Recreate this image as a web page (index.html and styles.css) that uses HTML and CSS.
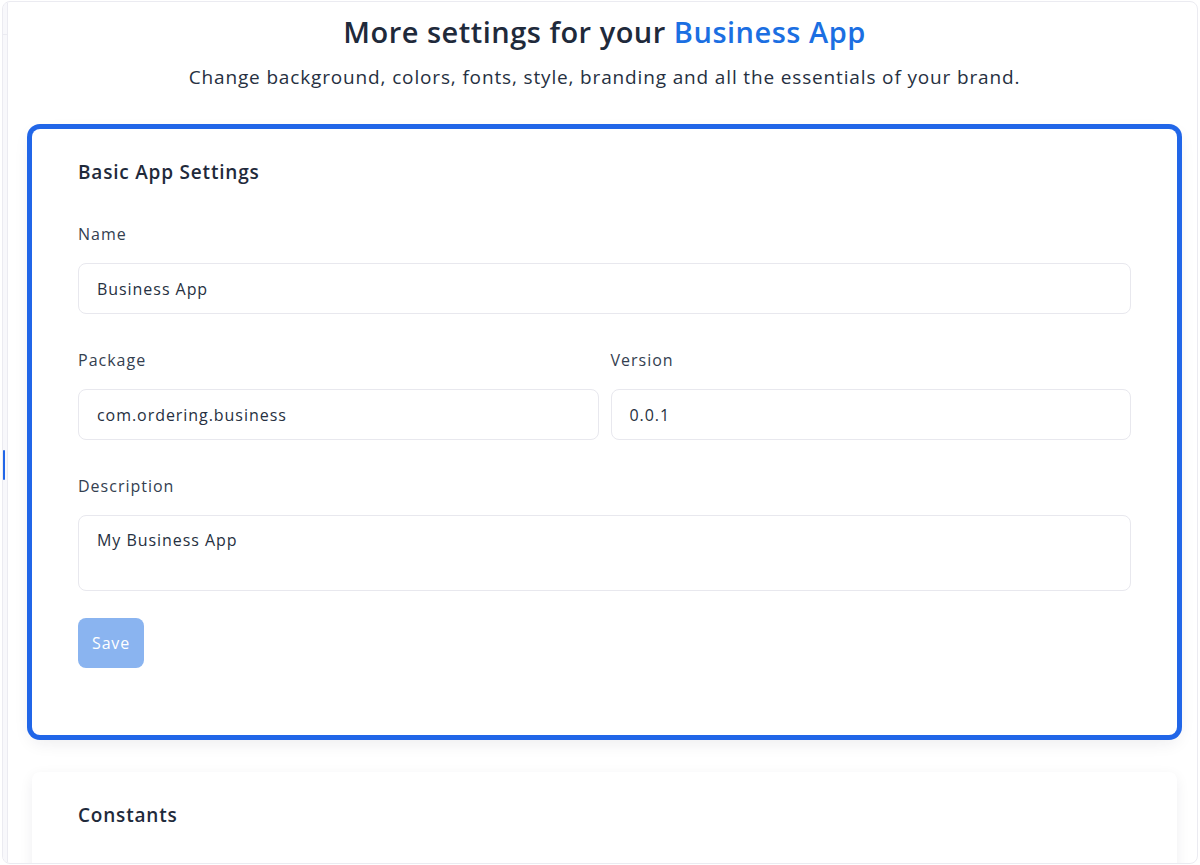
FILE: index.html
```html
<!DOCTYPE html>
<html lang="en">
<head>
<meta charset="utf-8">
<title>More settings for your Business App</title>
<link rel="stylesheet" href="styles.css">
</head>
<body>
<div class="frame">
  <aside class="sidebar">
    <div class="sidebar-head"></div>
    <div class="sidebar-marker"></div>
  </aside>
  <main class="main">
    <header class="page-head">
      <h1 class="title">More settings for your <span class="accent">Business App</span></h1>
      <p class="subtitle">Change background, colors, fonts, style, branding and all the essentials of your brand.</p>
    </header>

    <section class="card card-active">
      <h2 class="card-title">Basic App Settings</h2>
      <div class="field">
        <label class="label">Name</label>
        <div class="input">Business App</div>
      </div>
      <div class="row">
        <div class="field">
          <label class="label">Package</label>
          <div class="input">com.ordering.business</div>
        </div>
        <div class="field">
          <label class="label">Version</label>
          <div class="input">0.0.1</div>
        </div>
      </div>
      <div class="field field-last">
        <label class="label">Description</label>
        <div class="input textarea">My Business App</div>
      </div>
      <button class="btn-save" type="button">Save</button>
    </section>

    <section class="card">
      <h2 class="card-title">Constants</h2>
    </section>
  </main>
</div>
</body>
</html>
```

FILE: styles.css
```css
* { box-sizing: border-box; }

html, body {
  margin: 0;
  padding: 0;
  background: #ffffff;
  font-family: "Open Sans", "Liberation Sans", sans-serif;
  color: #263041;
}

.frame {
  margin: 1px 0 0 2px;
  width: 1196px;
  height: 863px;
  border: 1px solid #ebebf1;
  border-radius: 8px;
  display: flex;
  overflow: hidden;
  background: #ffffff;
}

.sidebar {
  width: 5px;
  flex: none;
  background: #f8f8fb;
  border-right: 1px solid #ebebf1;
  display: flex;
  flex-direction: column;
}

.sidebar-head {
  height: 33px;
  border-bottom: 1px solid #ebebf1;
}

.sidebar-marker {
  margin-top: 415px;
  width: 2px;
  height: 30px;
  background: #2166e8;
  border-radius: 1px;
}

.main {
  flex: 1;
  padding: 10px 20px 0 24px;
  overflow: hidden;
}

.page-head {
  text-align: center;
}

.title {
  margin: 0;
  font-size: 29px;
  line-height: 40px;
  font-weight: 600;
  color: #1f2a3b;
  letter-spacing: 0.5px;
}

.accent { color: #1b6fe2; }

.subtitle {
  margin: 12px 0 0;
  font-size: 19px;
  line-height: 26px;
  color: #263041;
  letter-spacing: 0.85px;
}

.card {
  margin-top: 39px;
  background: #ffffff;
  border-radius: 8px;
  padding: 31px 46px 67px;
  box-shadow: 0 4px 14px rgba(30, 30, 60, 0.07);
}

.card-active {
  box-shadow: 0 0 0 5px #2166e8, 0 6px 18px rgba(30, 30, 60, 0.10);
}

.card + .card { margin-top: 37px; }

.card-title {
  margin: 0 0 38px;
  font-size: 19px;
  line-height: 24px;
  font-weight: 600;
  color: #1f2a3b;
  letter-spacing: 0.8px;
}

.field {
  margin-bottom: 34px;
}

.field-last {
  margin-bottom: 27px;
}

.label {
  display: block;
  font-size: 16px;
  line-height: 24px;
  color: #344050;
  margin-bottom: 17px;
  letter-spacing: 1px;
}

.input {
  height: 51px;
  border: 1px solid #e8e8ee;
  border-radius: 8px;
  padding: 0 18px;
  display: flex;
  align-items: center;
  font-size: 16px;
  color: #263041;
  letter-spacing: 0.95px;
}

.textarea {
  height: 76px;
  align-items: flex-start;
  padding-top: 12px;
  line-height: 24px;
}

.row {
  display: grid;
  grid-template-columns: 1fr 1fr;
  gap: 12px;
}

.btn-save {
  display: block;
  width: 66px;
  height: 50px;
  border: none;
  border-radius: 8px;
  background: #8ab4f0;
  color: #ffffff;
  font-family: inherit;
  font-size: 16px;
  padding: 0;
  letter-spacing: 0.8px;
}
```
